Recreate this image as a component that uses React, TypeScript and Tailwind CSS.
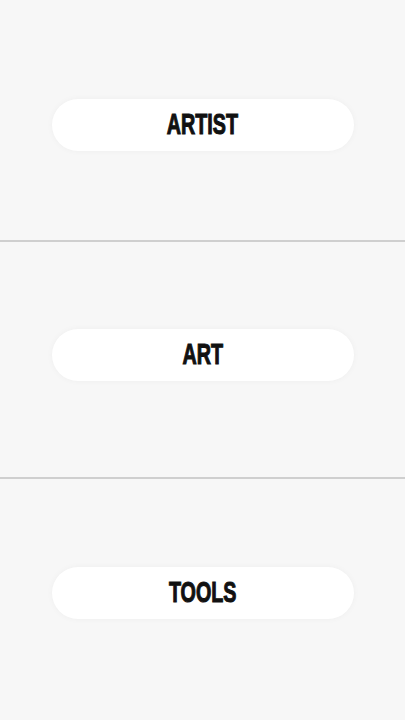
const sections = [
  { label: 'ARTIST', box: 'h-[242px] pt-[99px]' },
  { label: 'ART', box: 'h-[237px] pt-[87px]' },
  { label: 'TOOLS', box: 'flex-1 pt-[88px]' },
]

function PillButton({ label }: { label: string }) {
  return (
    <button
      type="button"
      className="mx-auto flex h-[52px] w-[302px] items-center justify-center rounded-full bg-white shadow-[0_0_6px_rgba(0,0,0,0.04)]"
    >
      {/* squeezed heavy caps for the poster-style label */}
      <span className="inline-block -translate-y-[1px] scale-x-[0.68] font-['Liberation_Sans',Arial,sans-serif] text-[29px] font-bold leading-none text-[#111] [-webkit-text-stroke:1.1px_#111]">
        {label}
      </span>
    </button>
  )
}

export default function App() {
  return (
    <div className="flex h-[720px] w-full flex-col bg-[#f7f7f7]">
      {sections.map((s, i) => (
        <div key={s.label} className={`flex flex-col ${s.box} ${i < sections.length - 1 ? 'border-b-2 border-[#cfcfcf]' : ''}`}>
          <PillButton label={s.label} />
        </div>
      ))}
    </div>
  )
}
